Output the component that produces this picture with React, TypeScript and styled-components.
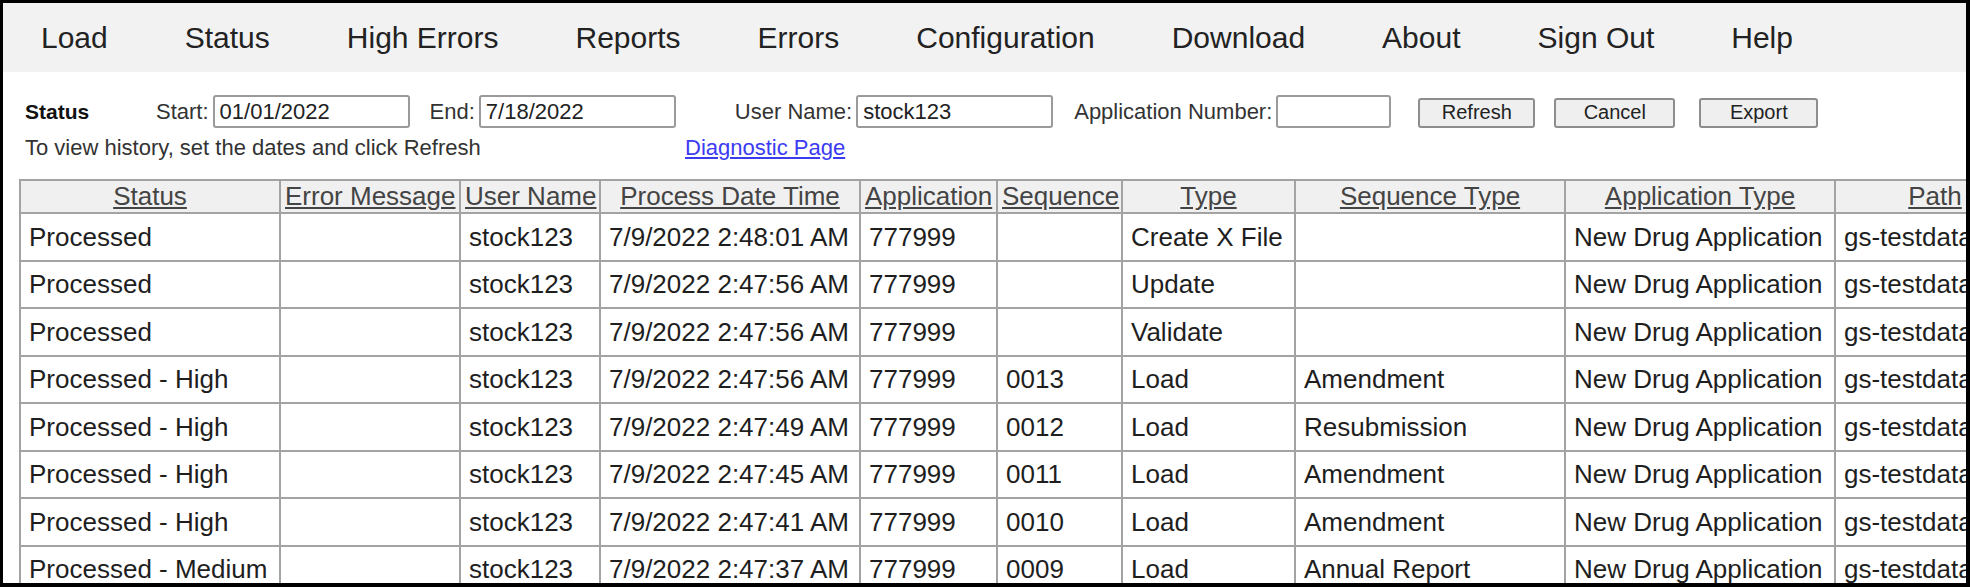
import React, { FC } from 'react';
import styled, { createGlobalStyle } from 'styled-components';

const GlobalStyle = createGlobalStyle`
  html, body {
    margin: 0;
    padding: 0;
    background: #ffffff;
  }
  body {
    font-family: 'Liberation Sans', Arial, sans-serif;
  }
`;

const Frame = styled.div`
  box-sizing: border-box;
  width: 1970px;
  height: 587px;
  border: 3px solid #000;
  border-right-width: 4px;
  border-bottom-width: 4px;
  overflow: hidden;
  background: #fff;
`;

const NavBar = styled.nav`
  display: flex;
  align-items: center;
  gap: 77px;
  height: 69px;
  padding-left: 38px;
  background: #f2f2f2;
`;

const NavItem = styled.a`
  font-size: 30px;
  color: #222;
  text-decoration: none;
  white-space: nowrap;
`;

const FilterSection = styled.section`
  display: flex;
  flex-direction: column;
  gap: 8px;
  padding: 23px 0 0 22px;
  font-size: 22px;
  color: #333;
`;

const FilterRow = styled.div`
  display: flex;
  align-items: center;
  height: 33px;
`;

const Title = styled.span`
  width: 131px;
  font-weight: bold;
  font-size: 21px;
  color: #111;
`;

const Field = styled.label<{ $ml: number }>`
  display: flex;
  align-items: center;
  gap: 4px;
  margin-left: ${p => p.$ml}px;
  white-space: nowrap;
`;

const TextInput = styled.input<{ $w: number }>`
  box-sizing: border-box;
  width: ${p => p.$w}px;
  height: 33px;
  padding: 0 5px;
  border: 2px solid #9a9a9a;
  border-radius: 3px;
  font-family: inherit;
  font-size: 22px;
  color: #222;
  background: #fff;
`;

const ActionButton = styled.button<{ $ml: number; $w: number }>`
  box-sizing: border-box;
  width: ${p => p.$w}px;
  height: 30px;
  margin-left: ${p => p.$ml}px;
  margin-top: 2px;
  border: 2px solid #8d8d8d;
  border-radius: 3px;
  background: #efefef;
  font-family: inherit;
  font-size: 20px;
  color: #222;
`;

const HintRow = styled.div`
  display: flex;
  align-items: center;
  height: 24px;
`;

const Hint = styled.span`
  width: 660px;
`;

const DiagnosticLink = styled.a`
  color: #3b3bf2;
  text-decoration: underline;
`;

const Grid = styled.table`
  width: 2015px;
  margin: 19px 0 0 16px;
  table-layout: fixed;
  border-collapse: collapse;
  font-size: 26px;
  color: #1e1e1e;
`;

const HeadCell = styled.th`
  height: 31px;
  padding: 0 4px;
  border: 2px solid #a3a3a3;
  background: #f0f0f0;
  font-weight: normal;
  text-align: center;
  white-space: nowrap;
  overflow: hidden;
  a {
    color: #444;
    text-decoration: underline;
  }
`;

const Cell = styled.td`
  height: 45.5px;
  padding: 0 8px;
  line-height: 30px;
  border: 2px solid #a3a3a3;
  white-space: nowrap;
  overflow: hidden;
`;

const columns = [
  { label: 'Status', width: 260 },
  { label: 'Error Message', width: 180 },
  { label: 'User Name', width: 140 },
  { label: 'Process Date Time', width: 260 },
  { label: 'Application', width: 137 },
  { label: 'Sequence', width: 125 },
  { label: 'Type', width: 173 },
  { label: 'Sequence Type', width: 270 },
  { label: 'Application Type', width: 270 },
  { label: 'Path', width: 200 },
];

const rows = [
  ['Processed', '', 'stock123', '7/9/2022 2:48:01 AM', '777999', '', 'Create X File', ''],
  ['Processed', '', 'stock123', '7/9/2022 2:47:56 AM', '777999', '', 'Update', ''],
  ['Processed', '', 'stock123', '7/9/2022 2:47:56 AM', '777999', '', 'Validate', ''],
  ['Processed - High', '', 'stock123', '7/9/2022 2:47:56 AM', '777999', '0013', 'Load', 'Amendment'],
  ['Processed - High', '', 'stock123', '7/9/2022 2:47:49 AM', '777999', '0012', 'Load', 'Resubmission'],
  ['Processed - High', '', 'stock123', '7/9/2022 2:47:45 AM', '777999', '0011', 'Load', 'Amendment'],
  ['Processed - High', '', 'stock123', '7/9/2022 2:47:41 AM', '777999', '0010', 'Load', 'Amendment'],
  ['Processed - Medium', '', 'stock123', '7/9/2022 2:47:37 AM', '777999', '0009', 'Load', 'Annual Report'],
];

const navItems = ['Load', 'Status', 'High Errors', 'Reports', 'Errors', 'Configuration', 'Download', 'About', 'Sign Out', 'Help'];

const App: FC = () => {
  return (
    <>
      <GlobalStyle />
      <Frame>
        <NavBar>
          {navItems.map(item => (
            <NavItem key={item}>{item}</NavItem>
          ))}
        </NavBar>

        <FilterSection>
          <FilterRow>
            <Title>Status</Title>
            <Field $ml={0}>
              Start:
              <TextInput $w={197} defaultValue="01/01/2022" />
            </Field>
            <Field $ml={20}>
              End:
              <TextInput $w={197} defaultValue="7/18/2022" />
            </Field>
            <Field $ml={59}>
              User Name:
              <TextInput $w={197} defaultValue="stock123" />
            </Field>
            <Field $ml={21}>
              Application Number:
              <TextInput $w={115} defaultValue="" />
            </Field>
            <ActionButton $ml={27} $w={117}>Refresh</ActionButton>
            <ActionButton $ml={19} $w={121}>Cancel</ActionButton>
            <ActionButton $ml={24} $w={119}>Export</ActionButton>
          </FilterRow>
          <HintRow>
            <Hint>To view history, set the dates and click Refresh</Hint>
            <DiagnosticLink href="#">Diagnostic Page</DiagnosticLink>
          </HintRow>
        </FilterSection>

        <Grid>
          <colgroup>
            {columns.map(c => (
              <col key={c.label} style={{ width: c.width }} />
            ))}
          </colgroup>
          <thead>
            <tr>
              {columns.map(c => (
                <HeadCell key={c.label}>
                  <a>{c.label}</a>
                </HeadCell>
              ))}
            </tr>
          </thead>
          <tbody>
            {rows.map((r, i) => (
              <tr key={i}>
                {r.map((v, j) => (
                  <Cell key={j}>{v}</Cell>
                ))}
                <Cell>New Drug Application</Cell>
                <Cell>gs-testdata/777999</Cell>
              </tr>
            ))}
          </tbody>
        </Grid>
      </Frame>
    </>
  );
};

export default App;
